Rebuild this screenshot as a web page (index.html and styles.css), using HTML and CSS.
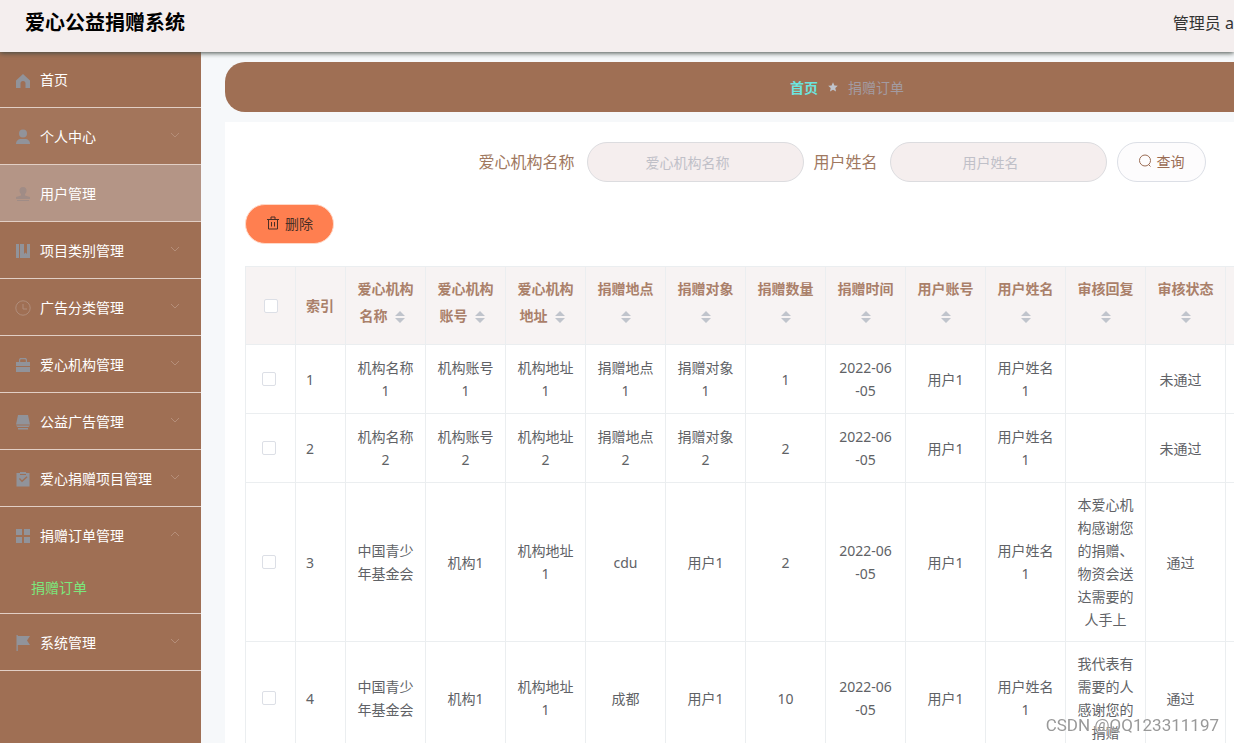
FILE: index.html
```html
<!DOCTYPE html>
<html lang="zh-CN">
<head>
<meta charset="utf-8">
<title>爱心公益捐赠系统</title>
<link rel="stylesheet" href="styles.css">
</head>
<body>
<svg class="defs" aria-hidden="true">
  <symbol id="down" viewBox="0 0 12 12"><path d="M2 4l4 4 4-4" fill="none" stroke="currentColor"/></symbol>
  <symbol id="up" viewBox="0 0 12 12"><path d="M2 8l4-4 4 4" fill="none" stroke="currentColor"/></symbol>
  <symbol id="sort" viewBox="0 0 10 12"><path d="M5 0l5 5H0zM5 12l5-5H0z" fill="currentColor"/></symbol>
</svg>
<header class="topbar">
  <h1 class="brand">爱心公益捐赠系统</h1>
  <span class="user">管理员 a</span>
</header>
<div class="body">
  <nav class="sidebar">
    <ul class="menu">
      <li class="item"><a class="link" href="#"><svg class="icon" viewBox="0 0 16 16"><path d="M8 1l7 6.500V15h-4.500v-4.500a2.500 2.500 0 0 0-5 0V15H1V7.500z"/></svg><span>首页</span></a></li>
      <li class="item tint"><a class="link" href="#"><svg class="icon" viewBox="0 0 16 16"><circle cx="8" cy="4.500" r="4"/><path d="M1 15c0-3 2-5 5-5h4c3 0 5 2 5 5z"/></svg><span>个人中心</span><svg class="arrow"><use href="#down"/></svg></a></li>
      <li class="item hover"><a class="link" href="#"><svg class="icon" viewBox="0 0 16 16"><path d="M8 1a3.500 3.500 0 0 1 3.500 3.500C11.500 6 11 7 10 8v1.500l5 1.500v2H1v-2l5-1.500V8C5 7 4.500 6 4.500 4.500A3.500 3.500 0 0 1 8 1zM2 14h12v1H2z"/></svg><span>用户管理</span></a></li>
      <li class="item"><a class="link" href="#"><svg class="icon" viewBox="0 0 16 16"><path d="M1 1h3v14H1zM5 1h4v10l1.500-1.500L12 11V1h3v14H5z"/></svg><span>项目类别管理</span><svg class="arrow"><use href="#down"/></svg></a></li>
      <li class="item"><a class="link" href="#"><svg class="icon faint" viewBox="0 0 16 16"><circle cx="8" cy="8" r="7.200"/><path d="M8 4v5h4"/></svg><span>广告分类管理</span><svg class="arrow"><use href="#down"/></svg></a></li>
      <li class="item"><a class="link" href="#"><svg class="icon" viewBox="0 0 16 16"><path d="M1 5h3V2.500L5 1h6l1 1.500V5h3v4H1zM5.200 5h5.600V3l-.6-.8H5.800l-.6.8zM1 10h14v5H1z" fill-rule="evenodd"/></svg><span>爱心机构管理</span><svg class="arrow"><use href="#down"/></svg></a></li>
      <li class="item"><a class="link" href="#"><svg class="icon" viewBox="0 0 16 16"><path d="M3 1h10l2 9.500H1zM1 11.500h14L13.500 13h-11zM3 14h10v1.500H3z"/></svg><span>公益广告管理</span><svg class="arrow"><use href="#down"/></svg></a></li>
      <li class="item"><a class="link" href="#"><svg class="icon" viewBox="0 0 16 16"><path d="M1.500 2H5V1h6v1h3.500v13.500h-13zM4 8l3 3.200 5.500-5-.9-.9L7 9.300 4.900 7zM5 3v1h6V3z" fill-rule="evenodd"/></svg><span>爱心捐赠项目管理</span><svg class="arrow"><use href="#down"/></svg></a></li>
      <li class="item"><a class="link" href="#"><svg class="icon" viewBox="0 0 16 16"><path d="M1 1h6v6H1zM9 1h6v6H9zM1 9h6v6H1zM9 9h6v6H9z"/></svg><span>捐赠订单管理</span><svg class="arrow"><use href="#up"/></svg></a>
        <a class="sub" href="#">捐赠订单</a></li>
      <li class="item"><a class="link" href="#"><svg class="icon" viewBox="0 0 16 16"><path d="M1.500 0h1.300v1H15l-3 4.500 3 4.500H2.800v6H1.500z"/></svg><span>系统管理</span><svg class="arrow"><use href="#down"/></svg></a></li>
    </ul>
  </nav>
  <main class="main">
    <div class="crumbs">
      <a class="home" href="#">首页</a>
      <svg class="star" viewBox="0 0 10 10"><path d="M5 .3l1.400 3.100 3.400.4-2.500 2.300.7 3.400L5 7.800 2 9.500l.7-3.400L.2 3.800l3.400-.4z"/></svg>
      <span>捐赠订单</span>
    </div>
    <section class="panel">
      <form class="search">
        <div class="field"><label for="org">爱心机构名称</label><input class="text" id="org" type="text" placeholder="爱心机构名称"></div>
        <div class="field"><label for="name">用户姓名</label><input class="text" id="name" type="text" placeholder="用户姓名"></div>
        <button class="btn query" type="button"><svg class="glyph" viewBox="0 0 14 14"><circle cx="7" cy="6.500" r="5.500"/><path d="M10.500 10.500l2 2"/></svg>查询</button>
      </form>
      <button class="btn delete" type="button"><svg class="glyph" viewBox="0 0 14 14"><path d="M1 3.500h12M2.500 3.500v9.500h9V3.500M5 3.500V1h4v2.500M5.500 6v4.500M8.500 6v4.500"/></svg>删除</button>
      <table class="grid">
        <colgroup><col class="narrow"><col class="narrow"><col class="col" span="11"><col></colgroup>
        <thead><tr>
          <th><input class="check" type="checkbox" aria-label="全选"></th>
          <th class="left">索引</th>
          <th>爱心机构名称<svg class="sort"><use href="#sort"/></svg></th>
          <th>爱心机构账号<svg class="sort"><use href="#sort"/></svg></th>
          <th>爱心机构地址<svg class="sort"><use href="#sort"/></svg></th>
          <th>捐赠地点<svg class="sort"><use href="#sort"/></svg></th>
          <th>捐赠对象<svg class="sort"><use href="#sort"/></svg></th>
          <th>捐赠数量<svg class="sort"><use href="#sort"/></svg></th>
          <th>捐赠时间<svg class="sort"><use href="#sort"/></svg></th>
          <th>用户账号<svg class="sort"><use href="#sort"/></svg></th>
          <th>用户姓名<svg class="sort"><use href="#sort"/></svg></th>
          <th>审核回复<svg class="sort"><use href="#sort"/></svg></th>
          <th>审核状态<svg class="sort"><use href="#sort"/></svg></th>
          <th></th>
        </tr></thead>
        <tbody>
          <tr><td class="pick"><input class="check" type="checkbox" aria-label="选择 1"></td><td class="left">1</td><td>机构名称1</td><td>机构账号1</td><td>机构地址1</td><td>捐赠地点1</td><td>捐赠对象1</td><td>1</td><td>2022-06<br>-05</td><td>用户1</td><td>用户姓名1</td><td></td><td class="state">未通过</td><td></td></tr>
          <tr><td class="pick"><input class="check" type="checkbox" aria-label="选择 2"></td><td class="left">2</td><td>机构名称2</td><td>机构账号2</td><td>机构地址2</td><td>捐赠地点2</td><td>捐赠对象2</td><td>2</td><td>2022-06<br>-05</td><td>用户1</td><td>用户姓名1</td><td></td><td class="state">未通过</td><td></td></tr>
          <tr><td class="pick"><input class="check" type="checkbox" aria-label="选择 3"></td><td class="left">3</td><td>中国青少年基金会</td><td>机构1</td><td>机构地址1</td><td>cdu</td><td>用户1</td><td>2</td><td>2022-06<br>-05</td><td>用户1</td><td>用户姓名1</td><td>本爱心机构感谢您的捐赠、物资会送达需要的人手上</td><td class="state">通过</td><td></td></tr>
          <tr><td class="pick"><input class="check" type="checkbox" aria-label="选择 4"></td><td class="left">4</td><td>中国青少年基金会</td><td>机构1</td><td>机构地址1</td><td>成都</td><td>用户1</td><td>10</td><td>2022-06<br>-05</td><td>用户1</td><td>用户姓名1</td><td>我代表有需要的人感谢您的捐赠</td><td class="state">通过</td><td></td></tr>
        </tbody>
      </table>
    </section>
  </main>
</div>
<div class="watermark">CSDN @QQ123311197</div>
</body>
</html>
```
FILE: styles.css
```css
* { box-sizing: border-box; }
body {
  margin: 0;
  height: 100vh;
  display: flex;
  flex-direction: column;
  overflow: hidden;
  background: #f6f8fa;
  color: #606266;
  font: 14px/23px "Noto Sans", "Noto Sans CJK SC", sans-serif;
}
a { text-decoration: none; }
input, button { font: inherit; }
.defs { display: none; }

.topbar {
  position: relative;
  z-index: 1;
  flex: none;
  height: 52px;
  display: flex;
  align-items: center;
  justify-content: space-between;
  padding: 0 0 6px 25px;
  background: #f4eeee;
  box-shadow: 0 1px 5px #404a44;
}
.brand { margin: 0; font-size: 20px; line-height: 30px; color: #000; }
.user { font-size: 16px; color: #333; white-space: nowrap; }

.body { flex: 1; min-height: 0; display: flex; }

.sidebar { flex: none; width: 201px; background: #9f6f54; }
.menu { list-style: none; margin: 0; padding: 0; }
.item { border-bottom: 1px solid #e2cfc5; }
.link {
  height: 56px;
  display: flex;
  align-items: center;
  gap: 9px;
  padding: 0 20px 0 15px;
  color: #fff;
}
.item:first-child .link { height: 55px; }
.tint { background: #a3755b; }
.hover { background: #b49586; }
.icon { width: 16px; height: 16px; margin-top: 2px; fill: #91939a; }
.hover .icon { fill: #a08c86; }
.icon.faint { fill: none; stroke: #b08d7b; }
.arrow { width: 12px; height: 12px; margin: 0 0 2px auto; color: #b58e79; }
.sub { display: block; height: 50px; padding-left: 31px; line-height: 50px; color: #7be87c; }

.main { flex: 1; min-width: 0; overflow: hidden; padding: 10px 0 0 24px; }
.crumbs {
  min-width: 1244px;
  height: 50px;
  display: flex;
  align-items: center;
  justify-content: center;
  gap: 10px;
  border-radius: 20px;
  background: #9f6f54;
  color: #a39ba1;
}
.home { font-weight: 700; color: #6ce5df; }
.star { width: 10px; height: 10px; fill: #c0c4cc; }
.panel { min-width: 1244px; margin-top: 10px; padding: 20px; background: #fff; }

.search { display: flex; justify-content: center; gap: 10px; padding-right: 10px; }
.field { display: flex; align-items: center; gap: 12px; font-size: 16px; color: #a07860; }
.text {
  width: 217px;
  height: 40px;
  padding: 0 30px 0 15px;
  border: 1px solid #dcdcdf;
  border-radius: 20px;
  background: #f5eeee;
  font-size: 14px;
  text-align: center;
}
.text::placeholder { color: #c0c0c8; }
.btn {
  height: 40px;
  display: flex;
  align-items: center;
  gap: 5px;
  padding: 0 20px 2px;
  border: 1px solid #dcdfe6;
  border-radius: 20px;
}
.glyph { width: 14px; height: 14px; fill: none; stroke: currentColor; }
.query { background: #fdfcfd; color: #9a6c54; }
.delete { margin: 22px 0; border-color: #ffd9c8; background: #ff7f50; color: #4a2f26; }

.grid {
  width: 100%;
  table-layout: fixed;
  border-collapse: separate;
  border-spacing: 0;
  border: solid #ebeef0;
  border-width: 1px 0 0 1px;
}
.narrow { width: 50px; }
.col { width: 80px; }
th, td {
  padding: 10px;
  border: solid #ebeef0;
  border-width: 0 1px 1px 0;
  text-align: center;
  vertical-align: middle;
}
th { background: #f7f3f3; color: #aa806a; }
td { height: 69px; }
.left { text-align: left; }
.pick { padding: 10px 14px 10px 10px; }
.state { padding-right: 20px; }
.check {
  appearance: none;
  display: block;
  width: 14px;
  height: 14px;
  margin: 0 auto;
  border: 1px solid #dcdfe6;
  border-radius: 2px;
  background: #fff;
}
.sort {
  width: 24px;
  height: 34px;
  padding: 11px 7px;
  vertical-align: middle;
  color: #c0c4cc;
}
.watermark {
  position: fixed;
  right: 15px;
  bottom: 6px;
  font-family: Roboto, sans-serif;
  font-size: 17px;
  color: #999;
  text-shadow: 0 0 2px #fff;
}
```
